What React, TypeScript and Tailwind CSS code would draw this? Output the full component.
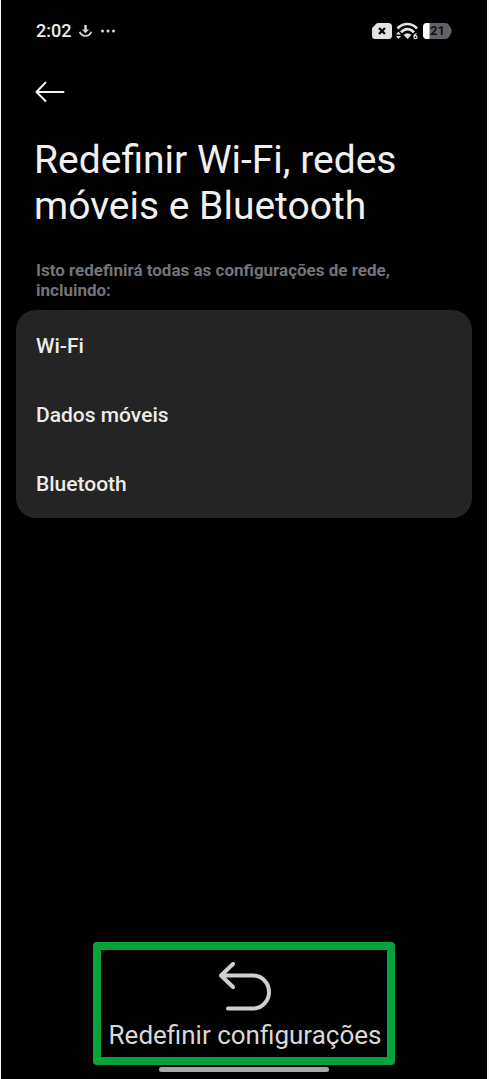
const networkItems = ["Wi-Fi", "Dados móveis", "Bluetooth"];

function StatusBar() {
  return (
    <div className="flex h-5 items-center justify-between px-[35px]">
      <div className="flex items-center">
        <span className="text-lg leading-5 font-medium text-[#ececec]">2:02</span>
        <svg className="ml-2 h-3 w-[13px]" viewBox="0 0 13 12" fill="none" stroke="#d8d8d8" aria-hidden="true">
          <path d="M6.5 0V6" strokeWidth="2.4" />
          <path d="M3 4.4h7L6.5 8.2z" fill="#d8d8d8" stroke="none" />
          <path d="M0.8 6.8C1.6 9.600 3.8 10.8 6.5 10.8s4.900-1.200 5.700-4" strokeWidth="1.8" />
        </svg>
        <svg className="ml-2 h-3 w-4" viewBox="0 0 16 12" fill="#d8d8d8" aria-hidden="true">
          <circle cx="2.500" cy="6" r="1.5" />
          <circle cx="8" cy="6" r="1.5" />
          <circle cx="13.500" cy="6" r="1.5" />
        </svg>
      </div>
      <div className="flex items-center">
        <svg className="h-4 w-5" viewBox="0 0 20 16" aria-hidden="true">
          <path d="M6 0H16.5Q20 0 20 3.5V12.5Q20 16 16.5 16H3.5Q0 16 0 12.5V6Q0 4.800 1 4L4 1Q5 0 6 0Z" fill="#e2e2e2" />
          <path d="M7 5l6 6M13 5l-6 6" stroke="#000" strokeWidth="2.300" />
        </svg>
        <svg className="ml-1 h-[18px] w-[23px]" viewBox="0 0 23 18" fill="none" stroke="#e2e2e2" aria-hidden="true">
          <path d="M1.500 6.500C7 0.500 15.500 0.500 21 6.500" strokeWidth="2.700" />
          <path d="M5 10.300C9 6 14 6 18 10.300" strokeWidth="2.700" />
          <path d="M7.500 12.800Q11.500 9.500 15.500 12.800L11.500 17Z" fill="#e2e2e2" stroke="none" />
          <path d="M0 12.500L2.500 9.500L5 12.500ZM0 14L2.500 17L5 14Z" fill="#e2e2e2" stroke="none" />
          <path d="M20.500 11.500Q18 12.500 18 15" strokeWidth="1.300" />
          <circle cx="19.500" cy="15.200" r="1.500" strokeWidth="1.300" />
        </svg>
        <div className="relative ml-1 flex h-4 w-[29px] items-center justify-center">
          <svg className="absolute inset-0 h-4 w-[29px]" viewBox="0 0 29 16" aria-hidden="true">
            <path d="M4 0H22Q25 0 26 2L28.500 6.500Q29 8 28.500 9.500L26 14Q25 16 22 16H4Q0 16 0 12V4Q0 0 4 0Z" fill="#626266" />
            <path d="M6.500 0H4Q0 0 0 4V12Q0 16 4 16H6.500Z" fill="#fff" />
          </svg>
          <span className="relative text-[13px] leading-4 font-bold text-[#111]">21</span>
        </div>
      </div>
    </div>
  );
}

export default function App() {
  return (
    <div className="flex min-h-screen flex-col border-r-2 border-l border-[#f4f4f4] bg-black pt-[21px] font-['Roboto',sans-serif]">
      <StatusBar />
      <main className="flex grow flex-col px-[15px]">
        <button type="button" aria-label="Voltar" className="mt-10 ml-[19px] h-[22px] w-[30px]">
          <svg className="h-[22px] w-[30px]" viewBox="0 0 30 22" fill="none" stroke="#f2f2f2" strokeWidth="2" strokeLinecap="round" strokeLinejoin="round" aria-hidden="true">
            <path d="M28.500 11H1.500M10.500 1.500L1.500 11l9 9" />
          </svg>
        </button>
        <h1 className="mt-[34px] px-[18px] text-[39px] leading-[46px] text-[#f0f0f0]">
          Redefinir Wi-Fi, redes móveis e Bluetooth
        </h1>
        <p className="mt-[31px] px-5 text-[17px] leading-5 font-bold text-[#73737a]">
          Isto redefinirá todas as configurações de rede, incluindo:
        </p>
        <ul className="mt-[10px] rounded-[20px] bg-[#242424] px-5 pb-px">
          {networkItems.map((item) => (
            <li key={item} className="pt-6 pb-[21px] text-[21px] leading-6 font-medium text-[#ececec]">
              {item}
            </li>
          ))}
        </ul>
        <button
          type="button"
          className="mt-auto flex h-[123px] flex-col items-center self-center rounded border-8 border-[#06a23c] pt-3 pr-1.5 pl-2 text-[26px] leading-8 whitespace-nowrap text-[#d8d8d8]"
        >
          <svg className="mb-[7px] h-[50px] w-[52px]" viewBox="0 0 52 50" fill="none" stroke="#cfcfcf" strokeWidth="4" strokeLinecap="round" strokeLinejoin="round" aria-hidden="true">
            <path d="M14 2L2 13.500L14 25M2 13.500H34C43 13.500 50 21 50 30S43 46.500 34 46.500H9" />
          </svg>
          Redefinir configurações
        </button>
      </main>
      <div className="mt-0.5 mb-[7px] h-[5px] w-[170px] self-center rounded-full bg-[#a8a8a8]" />
    </div>
  );
}
